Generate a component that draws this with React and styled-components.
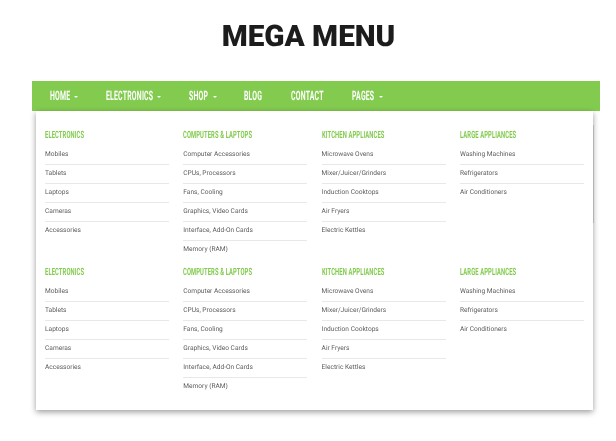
import React from "react";
import styled, { createGlobalStyle } from "styled-components";

const Global = createGlobalStyle`
  html, body { margin: 0; padding: 0; background: #fff; }
  body { font-family: Roboto, "Liberation Sans", sans-serif; text-rendering: geometricPrecision; }
`;
const Page = styled.div`
  width: 616px;
  height: 441px;
  overflow: hidden;
  padding: 0 16px 0 32px;
  box-sizing: border-box;
  will-change: opacity;
`;
const Title = styled.h1`
  margin: 0;
  height: 81px;
  padding: 19px 0 0 0;
  box-sizing: border-box;
  font: 900 29.7px/36px Roboto, sans-serif;
  color: #1c1c1c;
  text-align: center;
  width: 553px;
`;
const NavBar = styled.nav`
  width: 568px;
  height: 30px;
  background: #83cb4f;
  display: flex;
  align-items: center;
  padding: 2px 0 0 18px;
  box-sizing: border-box;
`;
const NavItem = styled.a`
  display: flex;
  align-items: center;
  width: ${(p) => p.$w}px;
  flex: none;
  color: #fff;
  text-transform: uppercase;
`;
const NavLabel = styled.span`
  flex: none;
  width: ${(p) => p.$w}px;
  white-space: nowrap;
  font: 700 13px/28px Roboto, sans-serif;
  letter-spacing: 0.4px;
  transform: scaleX(0.53);
  transform-origin: left center;
`;
const Caret = styled.span`
  flex: none;
  width: 0;
  height: 0;
  border-top: 2px solid #fff;
  border-left: 2px solid transparent;
  border-right: 2px solid transparent;
`;
const Panel = styled.div`
  position: relative;
  margin-left: 4px;
  width: 557px;
  height: 299px;
  box-sizing: border-box;
  background: #fff;
  padding: 17px 9px 0 9px;
  box-shadow: 0 2px 6px rgba(0, 0, 0, 0.4);
  display: grid;
  grid-template-columns: repeat(4, 124px);
  column-gap: 14.3px;
  grid-auto-rows: 137px;
  &::after {
    content: "";
    position: absolute;
    top: 14px;
    right: -1px;
    width: 1px;
    height: 98px;
    background: #b4b4b8;
  }
`;
const Column = styled.div`
  display: flex;
  flex-direction: column;
`;
const Heading = styled.h3`
  margin: 0 0 4px;
  padding-top: 1px;
  height: 13px;
  font: 700 10px/14px Roboto, sans-serif;
  letter-spacing: 0.2px;
  color: #83cb4f;
  text-transform: uppercase;
  white-space: nowrap;
  transform: scaleX(0.58);
  transform-origin: left center;
`;
const Link = styled.a`
  display: block;
  height: 19px;
  box-sizing: border-box;
  font: 400 6.6px/17px Roboto, sans-serif;
  color: #5c5c5c;
  border-bottom: 1px solid #e8e8e8;
  &:last-child { border-bottom: 0; }
`;

const nav = [
  ["Home", 1, 56, 24],
  ["Electronics", 1, 82.5, 51],
  ["Shop", 1, 55.5, 24],
  ["Blog", 0, 47, 0],
  ["Contact", 0, 61, 0],
  ["Pages", 1, 40, 27],
];
const cols = [
  ["Electronics", ["Mobiles", "Tablets", "Laptops", "Cameras", "Accessories"]],
  ["Computers & Laptops", ["Computer Accessories", "CPUs, Processors", "Fans, Cooling", "Graphics, Video Cards", "Interface, Add-On Cards", "Memory (RAM)"]],
  ["Kitchen Appliances", ["Microwave Ovens", "Mixer/Juicer/Grinders", "Induction Cooktops", "Air Fryers", "Electric Kettles"]],
  ["Large Appliances", ["Washing Machines", "Refrigerators", "Air Conditioners"]],
];

export default function App() {
  return (
    <Page>
      <Global />
      <Title>MEGA MENU</Title>
      <NavBar>
        {nav.map(([n, c, w, lw]) => (
          <NavItem key={n} $w={w}>
            <NavLabel $w={lw || w}>{n}</NavLabel>
            {c ? <Caret /> : null}
          </NavItem>
        ))}
      </NavBar>
      <Panel>
        {[...cols, ...cols].map(([h, items], i) => (
          <Column key={i}>
            <Heading>{h}</Heading>
            {items.map((t) => <Link key={t}>{t}</Link>)}
          </Column>
        ))}
      </Panel>
    </Page>
  );
}
